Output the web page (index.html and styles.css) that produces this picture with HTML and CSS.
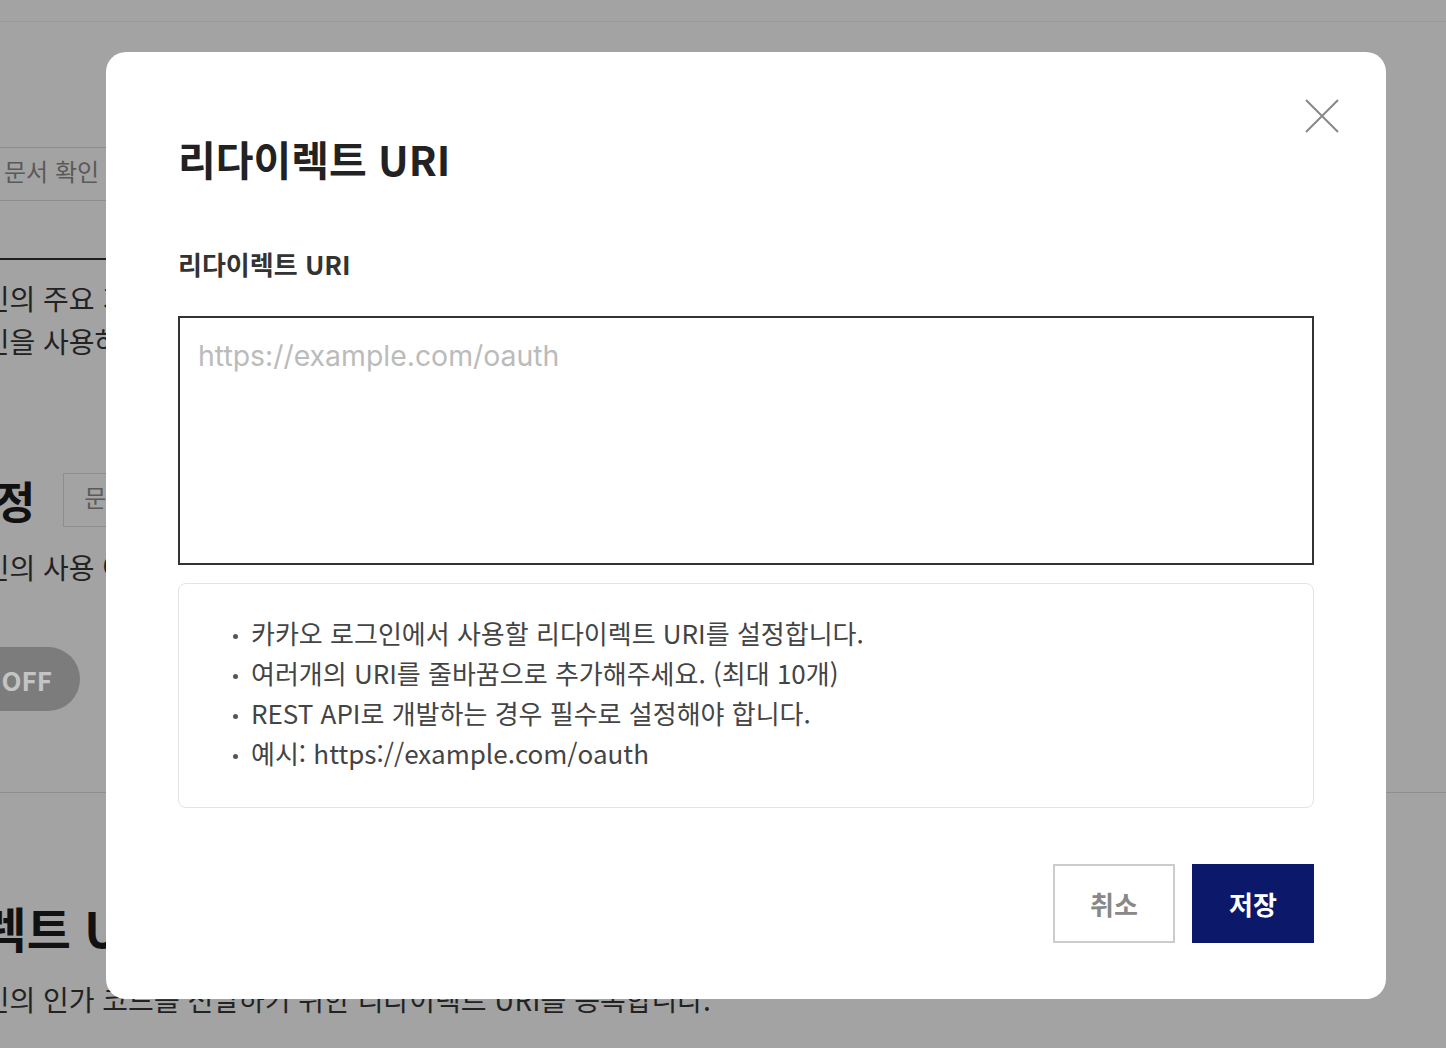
FILE: index.html
```html
<!DOCTYPE html>
<html lang="ko">
<head>
  <meta charset="UTF-8" />
  <meta name="viewport" content="width=device-width, initial-scale=1.0" />
  <title>리다이렉트 URI</title>
  <link rel="stylesheet" href="styles.css">
</head>
<body>
  <!-- 뒤쪽 설정 페이지 (딤 처리됨) -->
  <div class="page">
    <div class="topbar"></div>
    <div class="page-inner">
      <div class="head-row">
        <button class="doc-btn">문서 확인</button>
      </div>
      <p class="desc first">카카오 로그인의 주요 기능을 확인하세요.<br>카카오 로그인을 사용하려면 설정이 필요합니다.</p>

      <div class="section-title">
        <h2>상태 설정</h2>
        <button class="doc-btn">문서 확인</button>
      </div>
      <p class="desc">카카오 로그인의 사용 여부를 설정합니다.</p>
      <div class="toggle">OFF</div>
    </div>
    <div class="divider"></div>
    <div class="page-inner">
      <h2 class="big">리다이렉트 URI</h2>
      <p class="desc">카카오 로그인의 인가 코드를 전달하기 위한 리다이렉트 URI를 등록합니다.</p>
    </div>
  </div>

  <!-- 모달 -->
  <div class="backdrop">
    <div class="modal">
      <button class="close" aria-label="닫기">
        <svg width="34" height="34" viewBox="0 0 34 34">
          <path d="M1 1 L33 33 M33 1 L1 33" stroke="#888" stroke-width="2" fill="none" />
        </svg>
      </button>
      <h1 class="modal-title">리다이렉트 URI</h1>
      <label class="field-label" for="uri">리다이렉트 URI</label>
      <textarea id="uri" placeholder="https://example.com/oauth"></textarea>
      <ul class="notice">
        <li>카카오 로그인에서 사용할 리다이렉트 URI를 설정합니다.</li>
        <li>여러개의 URI를 줄바꿈으로 추가해주세요. (최대 10개)</li>
        <li>REST API로 개발하는 경우 필수로 설정해야 합니다.</li>
        <li>예시: https://example.com/oauth</li>
      </ul>
      <div class="actions">
        <button class="btn btn-cancel">취소</button>
        <button class="btn btn-save">저장</button>
      </div>
    </div>
  </div>
</body>
</html>
```

FILE: styles.css
```css
html, body {
  margin: 0;
  height: 100%;
  overflow: hidden;
}
body {
  font-family: "Noto Sans CJK KR", sans-serif;
  background: #a3a3a3;
  color: #222;
}

/* dimmed page behind the modal */
.topbar {
  height: 21px;
  border-bottom: 1px solid #999;
}
.page-inner {
  margin-left: -145px;
  width: 1500px;
}
.head-row {
  padding: 125px 0 57px 128px;
  border-bottom: 2px solid #1e1e1e;
}
.doc-btn {
  display: block;
  height: 54px;
  padding: 0 20px 8px;
  background: none;
  border: 1px solid #8e8e8e;
  font-family: inherit;
  font-size: 24px;
  color: #5a5a5a;
}
.desc {
  margin: 0 0 0 -8px;
  font-size: 28px;
  line-height: 43px;
  color: #222;
}
.desc.first {
  margin-top: 17px;
}
.section-title {
  display: flex;
  align-items: center;
  gap: 28px;
  margin-top: 110px;
  margin-bottom: 19px;
}
.section-title h2 {
  margin: 0 0 0 6px;
  font-size: 44px;
  line-height: 54px;
  color: #111;
}
.toggle {
  width: 140px;
  height: 64px;
  margin: 58px 0 0 85px;
  border-radius: 32px;
  background: #7c7c7c;
  color: #c4c4c4;
  font-size: 26px;
  font-weight: 700;
  display: flex;
  align-items: center;
  justify-content: flex-end;
  padding-right: 28px;
  box-sizing: border-box;
}
.divider {
  margin-top: 81px;
  border-top: 1px solid #8f8f8f;
}
.big {
  margin: 106px 0 23px -5px;
  font-size: 48px;
  line-height: 56px;
  color: #111;
}

/* modal */
.backdrop {
  position: fixed;
  inset: 0;
  padding: 52px 0 0 106px;
}
.modal {
  position: relative;
  width: 1280px;
  box-sizing: border-box;
  padding: 82px 72px 56px;
  background: #fff;
  border-radius: 20px;
}
.close {
  position: absolute;
  top: 47px;
  right: 47px;
  padding: 0;
  border: none;
  background: none;
  line-height: 0;
}
.modal-title {
  margin: 0 0 64px;
  font-size: 41px;
  line-height: 48px;
  font-weight: 700;
  color: #222;
}
.field-label {
  display: block;
  font-size: 26px;
  line-height: 36px;
  font-weight: 700;
  color: #333;
  margin-bottom: 34px;
}
textarea {
  display: block;
  width: 100%;
  height: 249px;
  box-sizing: border-box;
  border: 2px solid #333;
  padding: 22px 18px;
  font-family: "Inter", "Noto Sans CJK KR", sans-serif;
  font-size: 28.4px;
  line-height: 32px;
  resize: none;
  outline: none;
}
textarea::placeholder {
  color: #bbb;
}
.notice {
  list-style: none;
  margin: 18px 0 0;
  padding: 29px 40px 34px 54px;
  border: 1px solid #e3e3e3;
  border-radius: 8px;
}
.notice li {
  font-size: 26px;
  line-height: 40px;
  color: #444;
}
.notice li::before {
  content: "";
  display: inline-block;
  width: 5px;
  height: 5px;
  border-radius: 50%;
  background: #555;
  margin-right: 13px;
  vertical-align: middle;
}
.actions {
  display: flex;
  justify-content: flex-end;
  gap: 17px;
  margin-top: 56px;
}
.btn {
  width: 122px;
  height: 79px;
  font-family: inherit;
  font-size: 26px;
  font-weight: 700;
  cursor: pointer;
}
.btn-cancel {
  background: #fff;
  border: 2px solid #ccc;
  color: #888;
}
.btn-save {
  background: #0c186a;
  border: none;
  color: #fff;
}
```
